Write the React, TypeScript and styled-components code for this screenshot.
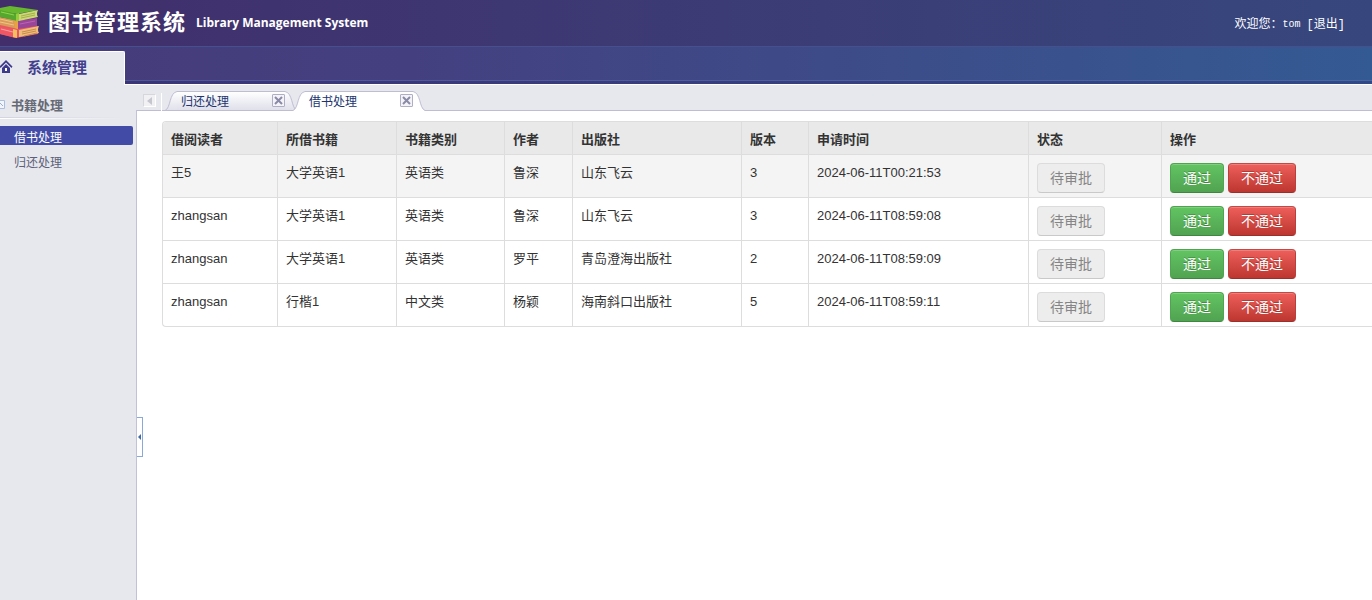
import React from 'react';
import styled, { createGlobalStyle } from 'styled-components';

const GlobalStyle = createGlobalStyle`
  * { box-sizing: border-box; }
  body { margin: 0; background: #fff; font-family: "Liberation Sans", "Noto Sans CJK SC", sans-serif; font-size: 13px; color: #333; }
  button { font-family: inherit; margin: 0; }
  a { color: inherit; text-decoration: none; }
`;

const Page = styled.div`
  display: flex;
  flex-direction: column;
  min-height: 100vh;
  overflow: hidden;
`;

const Header = styled.header`
  display: flex;
  justify-content: space-between;
  align-items: center;
  height: 46px;
  padding-right: 27px;
  color: #fff;
  background: linear-gradient(to right, #412e6b, #37477e);
`;

const Brand = styled.div`
  display: flex;
  align-items: center;
`;

const Title = styled.h1`
  margin: 0 0 6px 8px;
  font: bold 22px/30px "Noto Sans CJK SC", sans-serif;
  letter-spacing: 1px;
`;

const Subtitle = styled.span`
  margin-left: 10px;
  font: bold 12px/20px "Open Sans", sans-serif;
`;

const Welcome = styled.div`
  display: flex;
  align-items: center;
  padding-top: 3px;
  font: 12px/16px "Liberation Mono", "Noto Sans CJK SC", monospace;
`;

const UserName = styled.span`
  margin-right: 6px;
  font-size: 10px;
`;

const NavBar = styled.nav`
  display: flex;
  align-items: flex-end;
  height: 39px;
  border-top: 1px solid #46508e;
  border-bottom: 1px solid #fff;
  background:
    linear-gradient(to bottom, transparent 33px, rgba(90, 110, 175, 0.55) 33px, rgba(90, 110, 175, 0.55) 34px, rgba(40, 40, 110, 0.35) 34px),
    linear-gradient(to right, #463b79, #444080 30%, #345a93);
`;

const NavTab = styled.a`
  display: flex;
  align-items: center;
  width: 125px;
  height: 34px;
  margin-bottom: -1px;
  padding-bottom: 4px;
  color: #433f8e;
  font: bold 15px/28px "Noto Sans CJK SC", sans-serif;
  background: #e7e8ee;
  border: 1px solid #fff;
  border-width: 1px 1px 0 0;
  border-top-right-radius: 2px;

  svg { margin-right: 14px; }
`;

const Body = styled.div`
  display: flex;
  flex: 1;
`;

const Sidebar = styled.aside`
  flex: none;
  width: 137px;
  padding-top: 10px;
  background: #e7e8ee;
`;

const GroupTitle = styled.h2`
  display: flex;
  align-items: center;
  gap: 5px;
  height: 20px;
  margin: 0 0 2px;
  color: #666a75;
  font: bold 13px/18px "Noto Sans CJK SC", sans-serif;
`;

const Divider = styled.div`
  height: 2px;
  margin-bottom: 7px;
  background:
    linear-gradient(to right, #d3d4e0, transparent 90%) 0 0 / 100% 1px no-repeat,
    linear-gradient(to right, #fff, transparent 90%) 0 1px / 100% 1px no-repeat;
`;

const MenuItem = styled.a<{ $active?: boolean }>`
  display: block;
  height: 19px;
  margin: 0 4px 6px 0;
  padding-left: 14px;
  color: ${(p) => (p.$active ? '#fff' : '#5c6078')};
  background: ${(p) => (p.$active ? '#424ca7' : 'transparent')};
  border-radius: 0 2px 2px 0;
  font: 12px/22px "Noto Sans CJK SC", sans-serif;
`;

const Main = styled.main`
  position: relative;
  flex: 1;
  min-width: 0;
`;

const TabStrip = styled.div`
  display: flex;
  align-items: flex-end;
  height: 26px;
  background: linear-gradient(to top, #bfbdd2 1px, #e7e8ee 1px);
`;

const ScrollButton = styled.button`
  display: flex;
  align-items: center;
  justify-content: center;
  width: 13px;
  height: 13px;
  margin: 0 5px 4px 6px;
  padding: 0;
  background: #f1f1f4;
  border: 1px solid #fff;
  border-color: #d6d6dd #fff #fff #d6d6dd;
`;

const StripEdge = styled.div`
  width: 1px;
  height: 18px;
  margin-right: 3px;
  background: #fff;
`;

const Tab = styled.div<{ $active?: boolean }>`
  display: flex;
  position: relative;
  z-index: ${(p) => (p.$active ? 1 : 0)};
  height: 20px;

  & + & { margin-left: -4px; }
`;

const TabBody = styled.div<{ $active?: boolean }>`
  display: flex;
  justify-content: space-between;
  align-items: flex-start;
  width: 108px;
  padding: 2px 0 0 4px;
  background: ${(p) => (p.$active ? '#fff' : 'linear-gradient(#fff, #dfe0ea)')};
  border: 0 solid #bfbdd2;
  border-width: 1px 0 ${(p) => (p.$active ? '0' : '1px')};
`;

const TabLink = styled.a`
  color: #20346f;
  font: 12px/14px "Noto Sans CJK SC", sans-serif;
`;

const CloseButton = styled.button`
  display: flex;
  align-items: center;
  justify-content: center;
  width: 13px;
  height: 13px;
  padding: 0;
  background: #f3f3f8;
  border: 1px solid #aeaec6;
  border-radius: 1px;
`;

const Content = styled.div`
  padding: 10px 0 10px 25px;
`;

const Collapse = styled.button`
  position: absolute;
  left: 0;
  top: 332px;
  display: flex;
  align-items: center;
  width: 6px;
  height: 40px;
  padding: 0;
  background: #fff;
  border: 1px solid #8aa9d8;
  border-left: 0;
`;

const SideRule = styled.div`
  flex: none;
  width: 1px;
  margin: 25px 0 0 -1px;
  background: #c3c1d7;
`;

const Table = styled.table`
  width: 100%;
  table-layout: fixed;
  border: 1px solid #ddd;
  border-width: 1px 0 1px 1px;
  border-radius: 4px 0 0 4px;
  border-spacing: 0;
  overflow: hidden;
`;

const Th = styled.th<{ $width?: number }>`
  width: ${(p) => (p.$width ? `${p.$width}px` : 'auto')};
  height: 32px;
  padding: 3px 8px 0;
  text-align: left;
  line-height: 20px;
  background: #e9e9e9;
  & + & { border-left: 1px solid #ddd; }
`;

const Td = styled.td`
  height: 43px;
  padding: 8px 8px 4px;
  line-height: 20px;
  vertical-align: top;
  border-top: 1px solid #ddd;
  white-space: nowrap;
  & + & { border-left: 1px solid #ddd; }
`;

const Row = styled.tr`
  &:first-child { background: #f4f4f4; }
`;

const Actions = styled.div`
  display: flex;
  gap: 4px;
`;

const tones = {
  plain: { fill: '#ededed', border: '#dcdcdc #dcdcdc #c9c9c9', text: '#858585', shadow: 'none', inset: 'none' },
  success: { fill: 'linear-gradient(#62c462, #51a351)', border: '#4fa44f #4fa44f #3f8640', text: '#fff', shadow: '0 -1px 0 rgba(0,0,0,0.25)', inset: 'inset 0 1px 0 rgba(255,255,255,0.2)' },
  danger: { fill: 'linear-gradient(#ee5f5b, #bd362f)', border: '#c24a46 #b93f3a #98302b', text: '#fff', shadow: '0 -1px 0 rgba(0,0,0,0.25)', inset: 'inset 0 1px 0 rgba(255,255,255,0.2)' },
};

const ActionButton = styled.button<{ $tone: keyof typeof tones }>`
  height: 30px;
  padding: 0 12px;
  font-size: 14px;
  line-height: 20px;
  color: ${(p) => tones[p.$tone].text};
  background: ${(p) => tones[p.$tone].fill};
  border: 1px solid;
  border-color: ${(p) => tones[p.$tone].border};
  border-radius: 4px;
  text-shadow: ${(p) => tones[p.$tone].shadow};
  box-shadow: ${(p) => tones[p.$tone].inset};
`;

const BooksLogo = () => (
  <svg width="40" height="36" viewBox="0 0 40 36" aria-hidden="true">
    <path d="M0 20 18 18 38 21 38 29 16 33 0 29Z" fill="#ea5560" />
    <path d="M19 25 39 21 Q37 25 39 28 L19 32Z" fill="#eebd79" />
    <path d="M22 27 36 24M22 29 36 26M24 31 37 28" stroke="#c98a50" strokeWidth="1" />
    <path d="M0 22 16 25V33L0 29Z" fill="#ee5763" />
    <path d="M1 24 13 27" stroke="#fba0a0" strokeWidth="1" />
    <path d="M13 24 17 25V33L13 32Z" fill="#f4c05f" />
    <path d="M16 16 37 13 37 21 18 24Z" fill="#9b4599" />
    <path d="M20 19 35 16" stroke="#bb62b4" strokeWidth="1" />
    <path d="M0 12 16 15 18 24 0 20Z" fill="#d99a5b" />
    <path d="M0 14 13 17M0 17 14 20" stroke="#f0c483" strokeWidth="1" />
    <path d="M14 15 18 16V24L15 23Z" fill="#e8a244" />
    <path d="M0 3 10 1 38 5 17 9 0 6Z" fill="#67b82f" />
    <path d="M0 5 17 9V16L0 12Z" fill="#55a82d" />
    <path d="M1 7 14 10" stroke="#93d34c" strokeWidth="1" />
    <path d="M19 9 38 5 Q36 9 38 12 L19 16Z" fill="#cdd773" />
    <path d="M21 11 35 8M21 13 35 10" stroke="#a3b04e" strokeWidth="1" />
    <path d="M16 9 19 8V16L16 16Z" fill="#91cf3c" />
  </svg>
);

const HomeIcon = () => (
  <svg width="13" height="14" viewBox="0 0 13 14" aria-hidden="true">
    <path d="M6 0 12.500 6.500 11.500 8 6 2.500 .5 8 -.5 6.500Z" fill="#3f3b8c" />
    <path d="M2 8 6 4 10 8V13H2Z" fill="#3f3b8c" />
    <path d="M5 8H7V11H5Z" fill="#fff" />
  </svg>
);

const GroupIcon = () => (
  <svg width="6" height="10" viewBox="0 0 6 10" aria-hidden="true">
    <path d="M0 .5H4.500V8.500H0" fill="#f2f5fb" stroke="#a9bfdd" />
    <path d="M0 3 3 6" stroke="#9ab0cf" />
  </svg>
);

const TabEdge = ({ right, active }: { right?: boolean; active?: boolean }) => (
  <svg width="12" height="20" viewBox="0 0 12 20" aria-hidden="true">
    <defs>
      <linearGradient id="tabFill" x1="0" y1="0" x2="0" y2="1">
        <stop offset="0" stopColor="#fff" />
        <stop offset="1" stopColor="#dfe0ea" />
      </linearGradient>
    </defs>
    <g transform={right ? 'translate(12 0) scale(-1 1)' : undefined}>
      <path d="M0 20V19.500C6 17 4 2 12 .5V20Z" fill={active ? '#fff' : 'url(#tabFill)'} />
      <path d="M0 19.500C6 17 4 2 12 .5" fill="none" stroke="#bfbdd2" />
      {!active && <path d="M0 19.500H12" stroke="#bfbdd2" />}
    </g>
  </svg>
);

const tabs = [
  { label: '归还处理', active: false },
  { label: '借书处理', active: true },
];

const columns: [string, number?][] = [
  ['借阅读者', 114], ['所借书籍', 119], ['书籍类别', 108], ['作者', 68], ['出版社', 169],
  ['版本', 67], ['申请时间', 220], ['状态', 133], ['操作'],
];

const rows = [
  ['王5', '大学英语1', '英语类', '鲁深', '山东飞云', '3', '2024-06-11T00:21:53'],
  ['zhangsan', '大学英语1', '英语类', '鲁深', '山东飞云', '3', '2024-06-11T08:59:08'],
  ['zhangsan', '大学英语1', '英语类', '罗平', '青岛澄海出版社', '2', '2024-06-11T08:59:09'],
  ['zhangsan', '行楷1', '中文类', '杨颖', '海南斜口出版社', '5', '2024-06-11T08:59:11'],
];

export default function App() {
  return (
    <Page>
      <GlobalStyle />
      <Header>
        <Brand>
          <BooksLogo />
          <Title>图书管理系统</Title>
          <Subtitle>Library Management System</Subtitle>
        </Brand>
        <Welcome>
          <span>欢迎您：</span>
          <UserName>tom</UserName>
          <a href="#logout">[退出]</a>
        </Welcome>
      </Header>
      <NavBar>
        <NavTab href="#system"><HomeIcon />系统管理</NavTab>
      </NavBar>
      <Body>
        <Sidebar>
          <GroupTitle><GroupIcon />书籍处理</GroupTitle>
          <Divider />
          <MenuItem href="#borrow" $active>借书处理</MenuItem>
          <MenuItem href="#return">归还处理</MenuItem>
        </Sidebar>
        <SideRule />
        <Main>
          <TabStrip>
            <ScrollButton aria-label="向左滚动">
              <svg width="5" height="8" viewBox="0 0 5 8"><path d="M5 0V8L0 4Z" fill="#c6c6cf" /></svg>
            </ScrollButton>
            <StripEdge />
            {tabs.map((tab) => (
              <Tab key={tab.label} $active={tab.active}>
                <TabEdge active={tab.active} />
                <TabBody $active={tab.active}>
                  <TabLink href="#tab">{tab.label}</TabLink>
                  <CloseButton aria-label="关闭">
                    <svg width="9" height="9" viewBox="0 0 9 9"><path d="M1 1 8 8M8 1 1 8" stroke="#8a8aa8" strokeWidth="2" /></svg>
                  </CloseButton>
                </TabBody>
                <TabEdge right active={tab.active} />
              </Tab>
            ))}
          </TabStrip>
          <Content>
            <Table>
              <thead>
                <tr>{columns.map(([name, width]) => <Th key={name} $width={width}>{name}</Th>)}</tr>
              </thead>
              <tbody>
                {rows.map((row, i) => (
                  <Row key={i}>
                    {row.map((cell, j) => <Td key={j}>{cell}</Td>)}
                    <Td><ActionButton $tone="plain" disabled>待审批</ActionButton></Td>
                    <Td>
                      <Actions>
                        <ActionButton $tone="success">通过</ActionButton>
                        <ActionButton $tone="danger">不通过</ActionButton>
                      </Actions>
                    </Td>
                  </Row>
                ))}
              </tbody>
            </Table>
          </Content>
          <Collapse aria-label="收起侧栏">
            <svg width="4" height="6" viewBox="0 0 4 6"><path d="M4 0V6L1 3Z" fill="#3d6aa5" /></svg>
          </Collapse>
        </Main>
      </Body>
    </Page>
  );
}
